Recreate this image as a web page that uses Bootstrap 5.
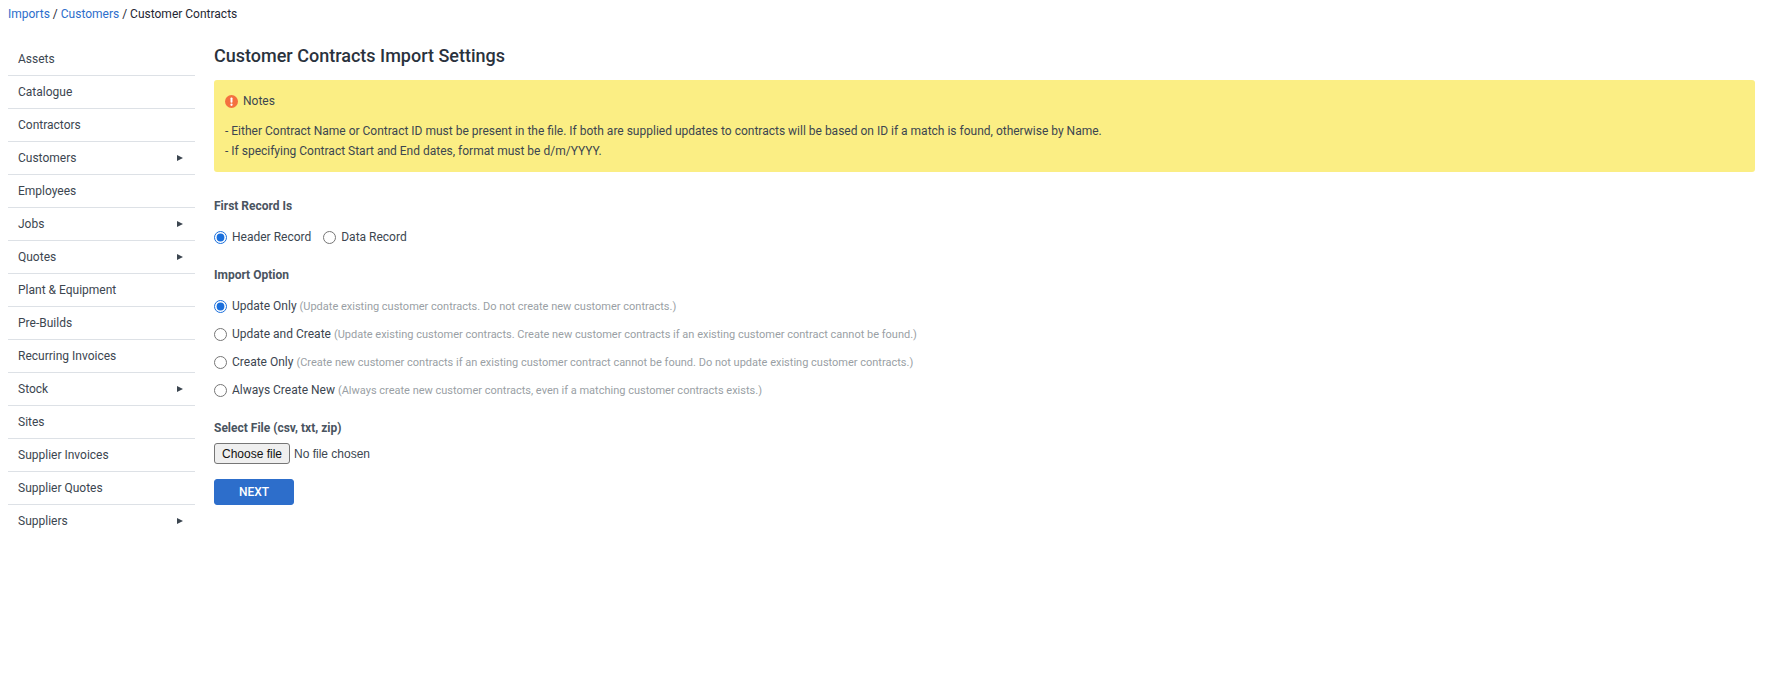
<!DOCTYPE html>
<html lang="en">
<head>
  <meta charset="UTF-8" />
  <meta name="viewport" content="width=device-width, initial-scale=1.0"/>
  <title>Customer Contracts Import Settings</title>
  <link href="https://cdn.jsdelivr.net/npm/bootstrap@5.3.3/dist/css/bootstrap.min.css" rel="stylesheet">
  <style>
    body { font-family: Roboto, "Liberation Sans", sans-serif; font-size: 12px; color: #3c4650; background: #fff; }
    a { color: #2d6ecb; text-decoration: none; }
    .crumbs { height: 28px; padding: 6px 8px 0; line-height: 16px; color: #1f2733; }
    .page-body { padding: 15px 8px 0; gap: 19px; }
    .side-menu { width: 187px; flex: none; }
    .side-menu a { display: flex; justify-content: space-between; align-items: center; height: 33px; padding: 0 12px 0 10px; color: #3c4650; border-bottom: 1px solid #dde1e6; }
    .side-menu a:last-child { border-bottom: 0; height: 31px; }
    .side-arrow { width: 0; height: 0; border-left: 6px solid #3c4650; border-top: 3.5px solid transparent; border-bottom: 3.5px solid transparent; }
    .main-pane { min-width: 0; flex: 1; padding-right: 3px; }
    .pane-title { font-size: 18px; font-weight: 500; color: #2a323d; line-height: 24px; margin: 1px 0 12px; }
    .notes-box { background: #fbee84; border-radius: 3px; padding: 10px 11px; height: 92px; margin-bottom: 26px; line-height: 20px; }
    .notes-head { height: 22px; margin-bottom: 9px; gap: 5px; }
    .notes-icon { width: 13px; height: 13px; }
    .field-label { font-weight: 700; line-height: 16px; margin-bottom: 7px; color: #4a5460; }
    .radio-row { display: flex; align-items: center; gap: 5px; height: 28px; margin: 0; }
    .radio-row input { appearance: auto; width: 13px; height: 13px; margin: 0; accent-color: #1a6fdc; }
    .radio-row small { font-size: 11px; color: #9a9fa5; }
    .first-group { gap: 12px; margin: 9px 0 16px; }
    .opt-group { margin: 9px 0 16px; }
    .file-row { gap: 4px; margin-bottom: 15px; font-family: "Liberation Sans", Arial, sans-serif; }
    .file-btn { height: 21px; width: 76px; padding: 0; font: inherit; color: #111; background: #efefef; border: 1px solid #767676; border-radius: 3px; }
    .next-btn { width: 80px; height: 26px; padding: 0; font-size: 12px; font-weight: 500; background: #2d6ecb; border-color: #2d6ecb; border-radius: 3px; }
  </style>
</head>
<body>
  <div class="crumbs"><a href="#">Imports</a> / <a href="#">Customers</a> / Customer Contracts</div>

  <div class="d-flex page-body">
    <nav class="side-menu">
      <a href="#">Assets</a>
      <a href="#">Catalogue</a>
      <a href="#">Contractors</a>
      <a href="#">Customers<span class="side-arrow"></span></a>
      <a href="#">Employees</a>
      <a href="#">Jobs<span class="side-arrow"></span></a>
      <a href="#">Quotes<span class="side-arrow"></span></a>
      <a href="#">Plant &amp; Equipment</a>
      <a href="#">Pre-Builds</a>
      <a href="#">Recurring Invoices</a>
      <a href="#">Stock<span class="side-arrow"></span></a>
      <a href="#">Sites</a>
      <a href="#">Supplier Invoices</a>
      <a href="#">Supplier Quotes</a>
      <a href="#">Suppliers<span class="side-arrow"></span></a>
    </nav>

    <main class="main-pane">
      <h1 class="pane-title">Customer Contracts Import Settings</h1>

      <div class="notes-box">
        <div class="d-flex align-items-center notes-head">
          <svg class="notes-icon" viewBox="0 0 16 16"><circle cx="8" cy="8" r="8" fill="#f4703f"/><rect x="6.8" y="3" width="2.4" height="6.5" rx="1" fill="#fff"/><circle cx="8" cy="12" r="1.4" fill="#fff"/></svg>
          <span>Notes</span>
        </div>
        <div>- Either Contract Name or Contract ID must be present in the file. If both are supplied updates to contracts will be based on ID if a match is found, otherwise by Name.</div>
        <div>- If specifying Contract Start and End dates, format must be d/m/YYYY.</div>
      </div>

      <div class="field-label">First Record Is</div>
      <div class="d-flex first-group">
        <label class="radio-row"><input type="radio" name="first" checked>Header Record</label>
        <label class="radio-row"><input type="radio" name="first">Data Record</label>
      </div>

      <div class="field-label">Import Option</div>
      <div class="opt-group">
        <label class="radio-row"><input type="radio" name="opt" checked><span>Update Only <small>(Update existing customer contracts. Do not create new customer contracts.)</small></span></label>
        <label class="radio-row"><input type="radio" name="opt"><span>Update and Create <small>(Update existing customer contracts. Create new customer contracts if an existing customer contract cannot be found.)</small></span></label>
        <label class="radio-row"><input type="radio" name="opt"><span>Create Only <small>(Create new customer contracts if an existing customer contract cannot be found. Do not update existing customer contracts.)</small></span></label>
        <label class="radio-row"><input type="radio" name="opt"><span>Always Create New <small>(Always create new customer contracts, even if a matching customer contracts exists.)</small></span></label>
      </div>

      <div class="field-label">Select File (csv, txt, zip)</div>
      <div class="d-flex align-items-center file-row">
        <button type="button" class="file-btn">Choose file</button>
        <span>No file chosen</span>
      </div>
      <button class="btn btn-primary next-btn">NEXT</button>
    </main>
  </div>
</body>
</html>
